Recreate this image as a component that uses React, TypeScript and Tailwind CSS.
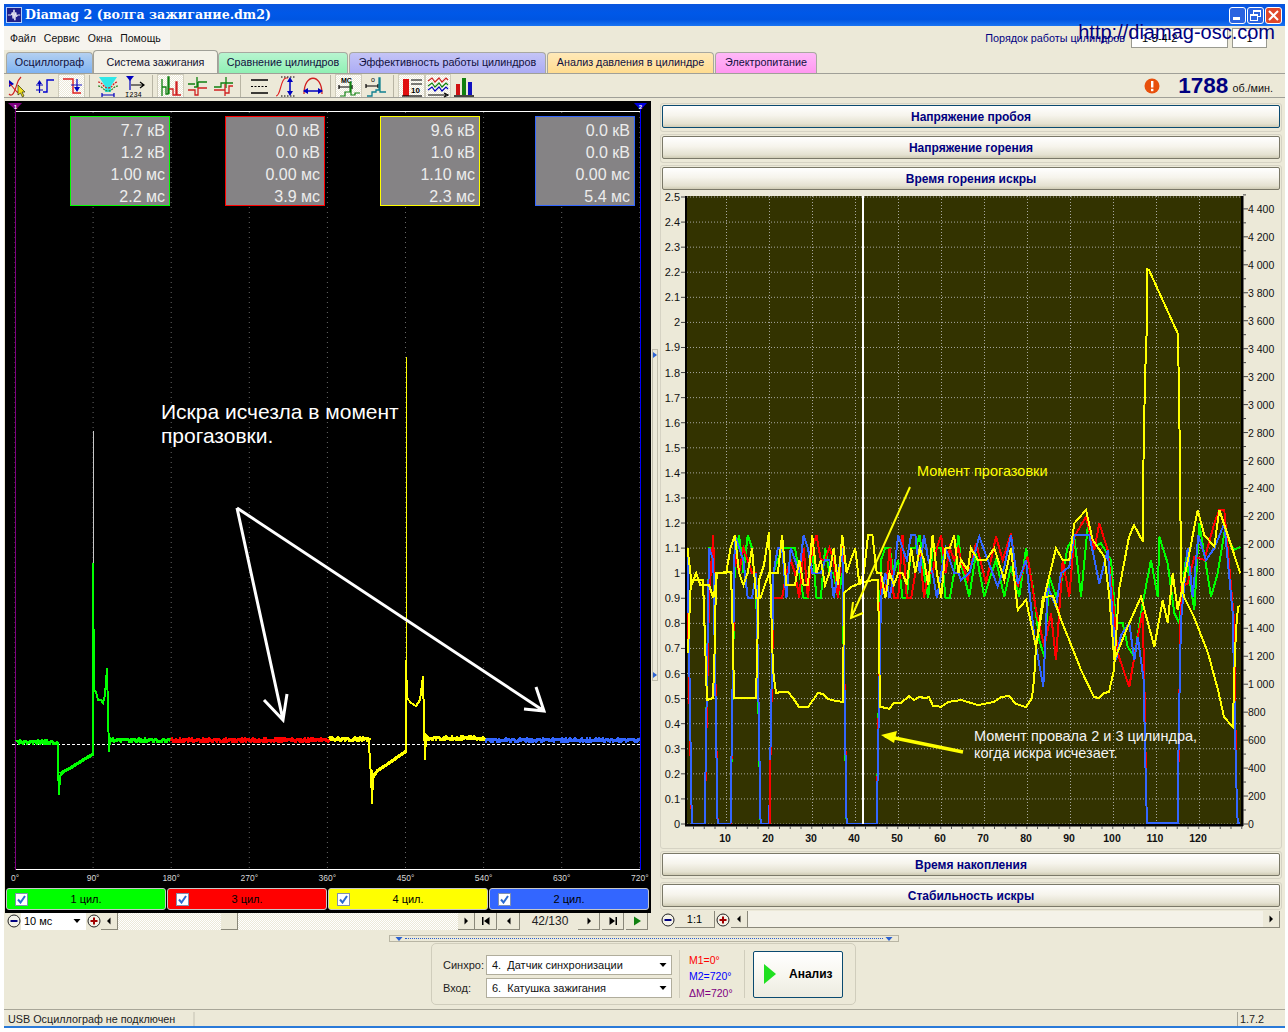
import React from "react";

const rng = (seed: number) => {
  let s = seed;
  const next = () => {
    s = (s * 16807) % 2147483647;
    return s / 2147483647;
  };
  for (let i = 0; i < 8; i++) next();
  return next;
};

/* ---------- oscilloscope traces (page coordinates) ---------- */
const noisy = (x0: number, x1: number, y: number, seed: number, amp = 1.5) => {
  const r = rng(seed);
  const pts: string[] = [];
  for (let x = x0; x <= x1; x += 1) pts.push(`${x},${(y + (r() - 0.5) * amp * 2).toFixed(0)}`);
  return pts.join(" ");
};

const greenPulse =
  "58,742 58,767 59,795 60,776 64,772 70,769 78,764 86,759 93,755 93,563 94,690 96,692 98,700 101,700 103,703 105,695 107,668 108,711 109,752 110,738 113,741";
const greenDecay = "60,774 64,771 70,768 78,763 86,758 93,754";
const yellowPulse =
  "369,740 370,765 371,772 372,804 373,778 378,771 386,766 396,759 406,752 406,660 407,698 411,703 416,706 420,700 423,676 424,720 425,760 426,735 430,739 434,738";
const yellowDecay = "371,770 373,776 378,770 386,765 396,758 406,751";

/* ---------- burn-time chart (page coordinates) ---------- */
const z6 = (s: string) =>
  s.split(" ").map((p) => {
    const [a, b] = p.split(",").map(Number);
    return [960 + a / 3, 480 + b / 3] as [number, number];
  });

const dropouts: [number, number][] = [
  [2, 5],
  [8, 11],
  [18, 20],
  [38, 45],
];
const xOf = (n: number) => 682.2 + 4.3 * n;

const bandTrace = (seed: number, drop: boolean) => {
  const r = rng(seed);
  const pts: [number, number][] = [];
  const levels = drop ? [548, 573, 598, 548, 573, 598, 560, 535] : [548, 573, 598, 585, 560, 535, 573, 585];
  for (let n = 1; n <= 64; n++) {
    const inDrop = drop && dropouts.some(([a, b]) => n >= a && n <= b);
    let y = levels[Math.floor(r() * levels.length)];
    if (inDrop) y = 824;
    pts.push([xOf(n), y]);
  }
  return pts;
};
const toPts = (p: [number, number][]) => p.map(([x, y]) => `${x.toFixed(1)},${y.toFixed(1)}`).join(" ");

const greenTail = z6(
  "0,250 25,350 45,220 70,350 85,300 105,240 130,350 150,260 175,350 195,205 215,320 235,480 250,530 265,290 285,350 300,310 320,200 340,170 360,350 380,140 400,200 420,190 450,240 465,430 485,430 500,500 520,530 545,370 570,240 590,350 595,170 620,250 640,400 655,430 675,230 700,390 715,130 750,350 770,280 790,160 820,210 838,200"
);
const redTail = z6(
  "0,240 20,300 45,190 75,310 105,170 125,240 150,160 170,320 200,230 225,390 250,500 270,400 285,540 305,240 325,350 340,170 375,110 400,210 415,130 440,210 455,350 470,520 505,620 530,470 545,395 552,700 555,925 558,1030 650,1030 655,670 660,320 680,310 700,230 730,240 760,130 775,90 790,90 820,430 825,880 830,1030 838,1030"
);
const blueTail = z6(
  "0,300 25,280 55,170 80,240 110,320 130,260 150,165 170,310 195,240 220,470 247,620 260,320 285,380 300,280 325,260 340,165 385,165 415,310 440,210 465,540 480,465 505,430 520,540 530,470 548,600 552,800 555,925 558,1030 650,1030 652,850 655,670 660,420 680,205 695,350 712,165 735,240 760,205 790,130 815,400 825,880 830,1030 838,1030"
);
const yellowTail = z6(
  "0,240 20,270 30,205 50,240 75,240 100,205 130,300 150,205 170,390 195,360 225,500 250,350 285,205 305,240 325,240 340,130 375,90 395,180 430,230 445,350 460,540 500,440 540,350 580,500 605,360 620,430 635,280 650,390 665,320 710,90 730,165 760,200 775,90 800,165 838,280"
);

const redPts = toPts([...bandTrace(1234, true), ...redTail]);
const greenPts = toPts([...bandTrace(4321, true), ...greenTail]);
const bluePts = toPts([...bandTrace(987, true), ...blueTail]);
const yellowPts = toPts([...bandTrace(31337, false), ...yellowTail]);

const yellowLow =
  "687,653 689,600 690,580 702,580 704,640 706,700 712,698 714,640 715,573 730,572 732,640 733,698 755,698 757,620 758,580 763,565 768,532 770,600 772,670 775,693 780,692 787,692 792,698 798,707 807,707 812,700 817,693 822,694 827,699 835,701 842,702 843,593 850,587 862,582 873,580 877,580 878,640 879,707 886,708 888,709 893,703 900,703 908,696 913,700 918,697 925,698 928,697 932,706 936,706 940,707 947,702 960,700 977,705 993,702 1000,697 1008,696 1015,704 1025,707 1031,698 1033,680 1035,647 1042,597 1052,596 1060,620 1067,637 1080,670 1093,697 1098,698 1103,693 1108,692 1113,670 1118,590 1128,537 1133,525 1142,542 1142,487 1143,433 1144,378 1146,323 1146,269 1148,270 1177,334 1178,397 1179,460 1180,580 1183,597 1193,617 1207,653 1217,690 1223,717 1232,727 1233,680 1235,630 1237,607 1239,606";

const hLines = Array.from({ length: 26 }, (_, i) => 824 - i * 25.08);
const vLines = Array.from({ length: 12 }, (_, i) => 725 + i * 43);
const leftLabels = Array.from({ length: 26 }, (_, i) => {
  const v = i / 10;
  return { t: i % 10 === 0 ? String(i / 10) : v.toFixed(1), y: 824 - i * 25.08 };
});
const rightLabels = Array.from({ length: 23 }, (_, i) => {
  const v = i * 200;
  const t = v >= 1000 ? `${Math.floor(v / 1000)} ${String(v % 1000).padStart(3, "0")}` : String(v);
  return { t, y: 824 - v * 0.1398 };
});
const xTicks = Array.from({ length: 52 }, (_, i) => 692.5 + i * 10.75);
const degLabels = Array.from({ length: 9 }, (_, i) => ({ t: `${i * 90}°`, x: 15 + i * 78.1 }));

/* ---------- small widgets ---------- */
const Check = () => (
  <span className="flex h-[13px] w-[13px] items-center justify-center border border-[#8090b0] bg-white">
    <svg width="9" height="9" viewBox="0 0 9 9">
      <path d="M1 4.5 L3.5 7.5 L8 1" fill="none" stroke="#2a6ad0" strokeWidth="2" />
    </svg>
  </span>
);

const Channel = ({ label, bg }: { label: string; bg: string }) => (
  <div className={`relative flex h-[22px] w-[160px] items-center justify-center rounded-[3px] border border-[#c8c8c8] text-[11px] text-black ${bg}`}>
    <span className="absolute left-[8px] top-[4px]">
      <Check />
    </span>
    {label}
  </div>
);

const Metric = ({ border, pos, rows }: { border: string; pos: string; rows: string[] }) => (
  <div className={`absolute flex h-[90px] w-[100px] flex-col border bg-[#858385] pr-[4px] pt-[3px] text-right text-[16px] leading-[22px] text-[#ececec] ${border} ${pos}`}>
    {rows.map((r, i) => (
      <span key={i}>{r}</span>
    ))}
  </div>
);

const Tab = ({ w, bg, label }: { w: string; bg: string; label: string }) => (
  <div className={`mt-[2px] flex h-[21px] items-center justify-center rounded-t-[4px] border border-b-0 border-[#a8a8a0] pb-px text-[10.75px] text-[#101040] ${w} ${bg}`}>
    {label}
  </div>
);

const AccordionBtn = ({ label, focus }: { label: string; focus?: boolean }) => (
  <div
    className={`flex h-[23px] items-center justify-center rounded-[2px] border bg-[linear-gradient(180deg,#ffffff_0%,#f6f4ec_45%,#e4e1d0_85%,#cfcbb4_100%)] text-[12px] font-bold text-[#000080] ${
      focus ? "border-[#0a4a70]" : "border-[#7a7868]"
    }`}
  >
    {label}
  </div>
);
const Accordion = ({ label, focus, cls }: { label: string; focus?: boolean; cls: string }) => (
  <div className={`shrink-0 rounded-[3px] border border-[#d6d3c4] p-px ${cls}`}>
    <AccordionBtn label={label} focus={focus} />
  </div>
);

const Tri = ({ dir, color = "#000" }: { dir: "l" | "r" | "d"; color?: string }) => (
  <svg width="8" height="8" viewBox="0 0 8 8">
    {dir === "l" && <path d="M5.5 0.5 V7.5 L2 4 Z" fill={color} />}
    {dir === "r" && <path d="M2.5 0.5 V7.5 L6 4 Z" fill={color} />}
    {dir === "d" && <path d="M0.5 2 H7.5 L4 6 Z" fill={color} />}
  </svg>
);

const BtnBox = ({ w, children }: { w: string; children: React.ReactNode }) => (
  <div className={`flex h-[17px] shrink-0 items-center justify-center border-b border-r border-[#8a887a] bg-[#ece9d8] ${w}`}>{children}</div>
);

const Round = ({ plus }: { plus?: boolean }) => (
  <svg width="14" height="14" viewBox="0 0 14 14">
    <circle cx="7" cy="7" r="6" fill="#f4f2e8" stroke="#222" strokeWidth="1" />
    <rect x="3.5" y="6" width="7" height="2" fill={plus ? "#a00000" : "#000080"} />
    {plus && <rect x="6" y="3.5" width="2" height="7" fill="#a00000" />}
  </svg>
);

/* ---------- toolbar icons ---------- */
const G = ({ children }: { children: React.ReactNode }) => (
  <svg width="24" height="24" viewBox="0 0 24 24" fill="none" strokeWidth="1.2">
    {children}
  </svg>
);
const icons: { pressed?: boolean; w: string; el: React.ReactNode }[] = [
  { w: "w-[27px]", el: <G><path d="M3 6 L8 10 L3 13 Z" fill="#0000c0" /><path d="M3 20 C7 24 9 16 11 10 C12 6 14 4 15 3" stroke="#d02020" /><path d="M3 10 C6 10 9 18 13 19" stroke="#d02020" /><path d="M12 11 L12 21 L14.5 19 L16.5 23 L18 22 L16 18 L19 18 Z" fill="#f0e020" stroke="#303000" strokeWidth="0.7" /></G> },
  { w: "w-[27px]", el: <G><path d="M3 11 H10 M3 16 H10" stroke="#0000c0" /><path d="M6.5 19 V9" stroke="#0000c0" /><path d="M4 10 L6.5 6 L9 10 Z" fill="#0000c0" /><path d="M10 18 H14 V6 H21" stroke="#0000d0" strokeWidth="1.4" /></G> },
  { pressed: true, w: "w-[27px]", el: <G><path d="M3 5 H13 V19 H21" stroke="#e02020" strokeWidth="1.4" /><path d="M11 11 H22" stroke="#0000c0" strokeWidth="0.9" /><path d="M17 5 V15" stroke="#0000c0" /><path d="M14 13 L17 18 L20 13 Z" fill="#0000c0" /></G> },
  { w: "w-[27px]", el: <G><path d="M3 3 H21 L15 12 V18 H9 V12 Z" fill="#30e8e8" /><path d="M2 8 C7 8 7 14 12 14 C17 14 17 8 22 8" stroke="#d02020" strokeDasharray="2 1" /><path d="M2 12 C7 12 7 17 12 17 C17 17 17 12 22 12" stroke="#208020" strokeDasharray="2 1" /><path d="M6 21 H18 M6 19 V23 M18 19 V23" stroke="#0000c0" /></G> },
  { w: "w-[27px]", el: <G><path d="M3 2 H11 L7 7 Z" fill="#0000c0" /><path d="M7 6 V16" stroke="#0000c0" /><path d="M8 11 H20 M17 8 L21 11 L17 14" stroke="#000" /><text x="2" y="23" fontSize="7" fill="#000" fontFamily="Liberation Mono">I234</text></G> },
  { pressed: true, w: "w-[27px]", el: <G><path d="M3 22 V5 M3 13 H7 V20 H9 V3 H10 V20" stroke="#108010" strokeWidth="1.3" /><path d="M10 15 H14 V21 H17 V8 H18 V21 H22" stroke="#d02020" strokeWidth="1.3" /></G> },
  { w: "w-[26px]", el: <G><path d="M3 10 H10 M13 8 H22 M12 3 V13 M9 13 H13 V8" stroke="#108010" strokeWidth="1.3" /><path d="M3 16 H10 V21 H13 V14 H22" stroke="#d02020" strokeWidth="1.3" /></G> },
  { w: "w-[26px]", el: <G><path d="M3 13 H10 V9 H22 M15 3 V14" stroke="#108010" strokeWidth="1.3" /><path d="M3 16 H14 V19 H18 V12 H22 M14 10 V22" stroke="#d02020" strokeWidth="1.3" /></G> },
  { w: "w-[27px]", el: <G><path d="M4 6 H21 M4 19 H21" stroke="#000" strokeWidth="1.3" /><path d="M4 12.5 H21" stroke="#000" strokeWidth="1.2" strokeDasharray="2 1.5" /></G> },
  { w: "w-[27px]", el: <G><path d="M2 22 C7 22 6 5 12 4 H14" stroke="#e02020" /><path d="M7 3 H22 M7 22 H22" stroke="#000" strokeDasharray="1.5 1.5" strokeWidth="1" /><path d="M16 5 V20" stroke="#0000c0" strokeWidth="1.5" /><path d="M13 8 L16 3 L19 8 Z M13 17 L16 22 L19 17 Z" fill="#0000c0" /></G> },
  { w: "w-[27px]", el: <G><path d="M3 20 C3 -1 21 -1 21 20" stroke="#d02020" strokeWidth="1.3" /><path d="M3 17 H21" stroke="#0000c0" strokeWidth="1.5" /><path d="M7 14 L2 17 L7 20 Z M17 14 L22 17 L17 20 Z" fill="#0000c0" /></G> },
  { pressed: true, w: "w-[27px]", el: <G><text x="4" y="9" fontSize="7" fontWeight="700" fill="#000" fontFamily="Liberation Sans">MC</text><path d="M2 13 H15 M2 11 V15 M15 11 V15" stroke="#000" /><path d="M3 22 H8 V18 H13 V8 H14 V21 H18 V19 H23" stroke="#108010" /></G> },
  { w: "w-[27px]", el: <G><text x="7" y="8" fontSize="7" fill="#000" fontFamily="Liberation Sans">o</text><path d="M2 12 H14 M2 10 V14 M14 10 V14" stroke="#000" /><path d="M3 22 H8 V18 H12 V16 H15 V4 H16 V18 H22" stroke="#108090" strokeWidth="1.3" /></G> },
  { pressed: true, w: "w-[27px]", el: <G><rect x="3" y="5" width="6" height="17" fill="#e01010" /><path d="M11 6 H22 M11 10 H22" stroke="#000" strokeWidth="1" /><text x="11" y="19" fontSize="8" fontWeight="700" fill="#000" fontFamily="Liberation Sans">10</text><path d="M2 22 H22" stroke="#000" /></G> },
  { pressed: true, w: "w-[26px]", el: <G><path d="M2 7 L6 4 L9 8 L13 4 L16 8 L20 4 L22 6" stroke="#d02020" /><path d="M2 12 L6 9 L9 13 L13 9 L16 13 L20 9 L22 11" stroke="#108010" /><path d="M2 16 L6 13 L9 17 L13 13 L16 17 L20 13 L22 15" stroke="#0000c0" /><path d="M2 21 H20 M18 19 L22 21 L18 23" stroke="#000" /></G> },
  { w: "w-[26px]", el: <G><rect x="4" y="10" width="4" height="11" fill="#d01010" /><rect x="10" y="4" width="4" height="17" fill="#108010" /><rect x="16" y="8" width="4" height="13" fill="#1010c0" /><path d="M2 22 H22" stroke="#000" strokeWidth="1.4" /></G> },
];
const seps = new Set([2, 4, 7, 10, 12]);

export default function App() {
  return (
    <div className="h-[1032px] w-[1288px] overflow-hidden bg-white pl-[4px] pt-[4px] font-['Liberation_Sans'] text-black">
      <div className="flex h-[1024px] w-[1281px] flex-col bg-[#ece9d8]">
        {/* title bar */}
        <div className="flex h-[22px] shrink-0 items-center bg-[linear-gradient(180deg,#0a55dd_0%,#0058e8_40%,#0055e2_70%,#1a74f2_100%)] pl-[2px] pr-[3px]">
          <svg width="16" height="16" viewBox="0 0 16 16" className="border border-white/70">
            <rect width="16" height="16" fill="#20208a" />
            <path d="M1 8 H5 L6 5 L7 12 L8 2 L9 14 L10 5 L11 10 L12 8 H15" stroke="#fff" strokeWidth="1" fill="none" />
          </svg>
          <span className="ml-[3px] font-['DejaVu_Serif'] text-[12.6px] font-bold text-white">Diamag 2 (волга зажигание.dm2)</span>
          <div className="ml-auto flex gap-px">
            <div className="flex h-[17px] w-[17px] items-end justify-start rounded-[3px] border border-white bg-[#2a63e0] p-[3px]">
              <div className="h-[3px] w-[7px] bg-white" />
            </div>
            <div className="relative h-[17px] w-[17px] rounded-[3px] border border-white bg-[#2a63e0]">
              <div className="absolute left-[5px] top-[2px] h-[7px] w-[8px] border border-t-2 border-white" />
              <div className="absolute left-[2px] top-[6px] h-[7px] w-[8px] border border-t-2 border-white bg-[#2a63e0]" />
            </div>
            <div className="flex h-[17px] w-[17px] items-center justify-center rounded-[3px] border border-white bg-[#e0482a]">
              <svg width="11" height="11" viewBox="0 0 11 11">
                <path d="M1 1 L10 10 M10 1 L1 10" stroke="#fff" strokeWidth="2" />
              </svg>
            </div>
          </div>
        </div>

        {/* menu row */}
        <div className="relative flex h-[24px] shrink-0 items-center pr-[18px]">
          <div className="flex h-full w-[166px] items-center gap-[8px] bg-[#f6f4ee] pl-[6px] pt-[2px] text-[10.5px] text-[#111]">
            <span>Файл</span>
            <span>Сервис</span>
            <span>Окна</span>
            <span>Помощь</span>
          </div>
          <span className="ml-auto mr-[6px] text-[10.8px] text-[#000080]">Порядок работы цилиндров</span>
          <div className="flex h-[20px] w-[97px] items-center border border-[#9a9a90] bg-white pl-[10px] text-[11px]">1-3-4-2</div>
          <div className="ml-[4px] flex h-[20px] w-[35px] items-center justify-center border border-[#9a9a90] bg-white text-[11px]">1</div>
          <span className="absolute right-[10px] top-[-6px] text-[20px] leading-[24px] text-[#000080]">http://diamag-osc.com</span>
        </div>

        {/* tabs */}
        <div className="flex h-[23px] shrink-0 items-start pl-[2px]">
          <Tab w="w-[87px]" bg="bg-[linear-gradient(180deg,#b4d0f0,#7fb3f2)]" label="Осциллограф" />
          <div className="flex h-[24px] w-[125px] items-center justify-center rounded-t-[4px] border border-b-0 border-[#a0a098] bg-[#f4f2e8] pb-px text-[10.75px] text-[#101030]">Система зажигания</div>
          <Tab w="w-[130px]" bg="bg-[linear-gradient(180deg,#b8f5d0,#90f0b4)]" label="Сравнение цилиндров" />
          <Tab w="ml-px w-[197px]" bg="bg-[linear-gradient(180deg,#c4c4f6,#acacf4)]" label="Эффективность работы цилиндров" />
          <Tab w="ml-px w-[167px]" bg="bg-[linear-gradient(180deg,#ffe9b8,#ffdc90)]" label="Анализ давления в цилиндре" />
          <Tab w="ml-px w-[102px]" bg="bg-[linear-gradient(180deg,#ffb8f8,#ff98f0)]" label="Электропитание" />
        </div>

        {/* toolbar */}
        <div className="flex h-[25px] shrink-0 items-center border-t border-b border-[#a0a098] pr-[12px]">
          {icons.map((ic, i) => (
            <React.Fragment key={i}>
              <div className={`flex h-[23px] shrink-0 items-center justify-center ${ic.w} ${ic.pressed ? "border-x border-t border-[#d0cdbc] bg-[repeating-conic-gradient(#ffffff_0_25%,#ece9d8_0_50%)] bg-[length:2px_2px]" : ""}`}>{ic.el}</div>
              {seps.has(i) && <div className="mx-[4px] h-[22px] w-px shrink-0 bg-[#b8b5a4]" />}
            </React.Fragment>
          ))}
          <div className="ml-auto flex items-center">
            <svg width="16" height="16" viewBox="0 0 16 16">
              <circle cx="8" cy="8" r="7.5" fill="#e8500c" />
              <rect x="7" y="3" width="2.4" height="6.5" fill="#fff" />
              <rect x="7" y="10.8" width="2.4" height="2.4" fill="#fff" />
            </svg>
            <span className="ml-[18px] mt-px text-[22.5px] font-bold leading-[24px] text-[#000080]">1788</span>
            <span className="ml-[4px] mt-[5px] text-[10.8px] text-[#111]">об./мин.</span>
          </div>
        </div>

        {/* main area */}
        <div className="mt-[3px] flex h-[828px] shrink-0 pl-px">
          {/* left column */}
          <div className="flex w-[646px] shrink-0 flex-col">
            <div className="flex h-[812px] flex-col bg-black">
              <div className="relative h-[787px]">
                <svg width="646" height="787" viewBox="5 101 646 787" className="block">
                  {degLabels.map((d) => (
                    <line key={d.x} x1={d.x} x2={d.x} y1="112" y2="870" stroke="#666" strokeWidth="1" strokeDasharray="1 4" />
                  ))}
                  <line x1="15" x2="640" y1="111.5" y2="111.5" stroke="#fff" />
                  <line x1="15" x2="640" y1="869.5" y2="869.5" stroke="#fff" />
                  <line x1="15.5" x2="15.5" y1="104" y2="870" stroke="#800080" />
                  <line x1="640.5" x2="640.5" y1="104" y2="870" stroke="#0000ff" />
                  <path d="M8 103 H22 L15.5 110 Z" fill="#800080" />
                  <path d="M634 103 H647 L640.5 110 Z" fill="#0000e0" />
                  <text x="15.5" y="108.5" fontSize="6" fontWeight="700" fill="#fff" textAnchor="middle">1</text>
                  <text x="640.5" y="108.5" fontSize="6" fontWeight="700" fill="#fff" textAnchor="middle">2</text>
                  <line x1="12" x2="640" y1="744.5" y2="744.5" stroke="#fff" strokeDasharray="3 2" />
                  {/* traces */}
                  <line x1="93.5" x2="93.5" y1="431" y2="563" stroke="#c8c8c8" />
                  <polyline points={noisy(16, 58, 742, 11)} fill="none" stroke="#00ff00" strokeWidth="3" shapeRendering="crispEdges" />
                  <polyline points={greenPulse} fill="none" stroke="#00ff00" strokeWidth="2" shapeRendering="crispEdges" />
                  <polyline points={greenDecay} fill="none" stroke="#00ff00" strokeWidth="3" shapeRendering="crispEdges" />
                  <polyline points={noisy(110, 171, 740, 12)} fill="none" stroke="#00ff00" strokeWidth="3" shapeRendering="crispEdges" />
                  <polyline points={noisy(171, 329, 740, 13)} fill="none" stroke="#ff0000" strokeWidth="3" shapeRendering="crispEdges" />
                  <polyline points={noisy(329, 370, 739, 14)} fill="none" stroke="#ffff00" strokeWidth="3" shapeRendering="crispEdges" />
                  <line x1="406.5" x2="406.5" y1="357" y2="752" stroke="#ffff00" />
                  <polyline points={yellowPulse} fill="none" stroke="#ffff00" strokeWidth="2" shapeRendering="crispEdges" />
                  <polyline points={yellowDecay} fill="none" stroke="#ffff00" strokeWidth="3" shapeRendering="crispEdges" />
                  <polyline points={noisy(426, 485, 738, 15)} fill="none" stroke="#ffff00" strokeWidth="3" shapeRendering="crispEdges" />
                  <polyline points={noisy(485, 640, 740, 16)} fill="none" stroke="#3366ff" strokeWidth="3" shapeRendering="crispEdges" />
                  {/* annotation arrows */}
                  <path d="M237 508 L283 720 M264 700 L283 720 L287 694" fill="none" stroke="#fff" strokeWidth="3" />
                  <path d="M237 508 L544 711 M536 687 L544 711 L524 709" fill="none" stroke="#fff" strokeWidth="3" />
                  {/* degree labels */}
                  {degLabels.map((d) => (
                    <text key={d.t} x={d.x} y="881" fontSize="8.5" fill="#d8d8d8" textAnchor="middle">{d.t}</text>
                  ))}
                </svg>
                <Metric border="border-[#00ff00]" pos="left-[65px] top-[15px]" rows={["7.7 кВ", "1.2 кВ", "1.00 мс", "2.2 мс"]} />
                <Metric border="border-[#ff0000]" pos="left-[220px] top-[15px]" rows={["0.0 кВ", "0.0 кВ", "0.00 мс", "3.9 мс"]} />
                <Metric border="border-[#ffff00]" pos="left-[375px] top-[15px]" rows={["9.6 кВ", "1.0 кВ", "1.10 мс", "2.3 мс"]} />
                <Metric border="border-[#3366ff]" pos="left-[530px] top-[15px]" rows={["0.0 кВ", "0.0 кВ", "0.00 мс", "5.4 мс"]} />
                <div className="absolute left-[156px] top-[299px] text-[21px] leading-[24px] text-white">
                  Искра исчезла в момент
                  <br />
                  прогазовки.
                </div>
              </div>
              <div className="flex gap-px pl-px">
                <Channel label="1 цил." bg="bg-[#00ff00]" />
                <Channel label="3 цил." bg="bg-[#ff0000]" />
                <Channel label="4 цил." bg="bg-[#ffff00]" />
                <Channel label="2 цил." bg="bg-[#3366ff]" />
              </div>
            </div>
            {/* transport row */}
            <div className="flex h-[16px] items-center text-[11px]">
              <div className="ml-px flex w-[15px] justify-center"><Round /></div>
              <div className="flex h-[17px] w-[65px] items-center justify-between bg-white pl-[3px] pr-[5px]">10 мс <Tri dir="d" /></div>
              <div className="flex w-[15px] justify-center"><Round plus /></div>
              <BtnBox w="w-[17px]"><Tri dir="l" /></BtnBox>
              <div className="flex h-[17px] w-[340px] bg-[repeating-conic-gradient(#ffffff_0_25%,#ece9d8_0_50%)] bg-[length:2px_2px]">
                <div className="w-[103px]" />
                <BtnBox w="w-[17px]"><span /></BtnBox>
              </div>
              <BtnBox w="w-[17px]"><Tri dir="r" /></BtnBox>
              <BtnBox w="w-[22px]"><svg width="10" height="8" viewBox="0 0 10 8"><path d="M1 0 H2.5 V8 H1 Z M8.5 0 V8 L3 4 Z" fill="#000" /></svg></BtnBox>
              <BtnBox w="ml-px w-[22px]"><Tri dir="l" /></BtnBox>
              <div className="w-[58px] pl-[2px] text-center text-[12px] text-[#222]">42/130</div>
              <BtnBox w="w-[22px]"><Tri dir="r" /></BtnBox>
              <BtnBox w="ml-[2px] w-[22px]"><svg width="10" height="8" viewBox="0 0 10 8"><path d="M7.5 0 H9 V8 H7.5 Z M1.5 0 V8 L7 4 Z" fill="#000" /></svg></BtnBox>
              <BtnBox w="ml-[2px] w-[22px]"><svg width="10" height="10" viewBox="0 0 10 10"><path d="M2 0.5 V9.5 L9 5 Z" fill="#108010" /></svg></BtnBox>
            </div>
          </div>

          {/* vertical splitter */}
          <div className="flex w-[9px] shrink-0 items-center justify-start pl-px">
            <div className="flex h-[332px] w-[6px] flex-col items-center justify-between border border-[#c0bdac] bg-[#ece9d8] py-[2px]">
              <svg width="4" height="6" viewBox="0 0 4 6"><path d="M0 0 L4 3 L0 6 Z" fill="#2a60d0" /></svg>
              <svg width="4" height="6" viewBox="0 0 4 6"><path d="M0 0 L4 3 L0 6 Z" fill="#2a60d0" /></svg>
            </div>
          </div>

          {/* right column */}
          <div className="flex w-[622px] shrink-0 flex-col gap-[2px] pt-[2px]">
            <Accordion label="Напряжение пробоя" focus cls="h-[29px]" />
            <Accordion label="Напряжение горения" cls="h-[29px]" />
            <div className="relative h-[684px] shrink-0 rounded-[3px] border border-[#d6d3c4] p-px">
              <AccordionBtn label="Время горения искры" />
              <svg width="620" height="657" viewBox="661 190 620 657" className="block font-['Liberation_Sans']">
                <rect x="686" y="196" width="554" height="628" fill="#333300" />
                {hLines.map((y) => (
                  <line key={y} x1="686" x2="1240" y1={y} y2={y} stroke="#a8a8a0" strokeDasharray="1 2" />
                ))}
                {vLines.map((x) => (
                  <line key={x} x1={x + 0.5} x2={x + 0.5} y1="196" y2="824" stroke="#a8a8a0" strokeDasharray="1 2" />
                ))}
                <polyline points={greenPts} fill="none" stroke="#00ff00" strokeWidth="2" shapeRendering="crispEdges" />
                <polyline points={redPts} fill="none" stroke="#ff0000" strokeWidth="2" shapeRendering="crispEdges" />
                <polyline points={bluePts} fill="none" stroke="#3366ff" strokeWidth="2" shapeRendering="crispEdges" />
                <polyline points={yellowPts} fill="none" stroke="#ffff00" strokeWidth="2" shapeRendering="crispEdges" />
                <polyline points={yellowLow} fill="none" stroke="#ffff00" strokeWidth="2" shapeRendering="crispEdges" />
                <line x1="769" x2="769" y1="760" y2="824" stroke="#ff0000" strokeWidth="2" />
                <rect x="861" y="196" width="2" height="628" fill="#ffffff" />
                {/* annotation arrows */}
                <path d="M909 487 L850 618 M852 602 L850 618 L862 613" fill="none" stroke="#ffff00" strokeWidth="2" />
                <path d="M962 752 L884 736" stroke="#ffff00" strokeWidth="3.5" />
                <path d="M880 735 L896 731 L893 743 Z" fill="#ffff00" />
                {/* axes */}
                <rect x="684" y="196" width="2" height="630" fill="#000" />
                <rect x="684" y="824" width="558" height="2.5" fill="#000" />
                <rect x="1240" y="196" width="2.5" height="630" fill="#000" />
                {leftLabels.map((l) => (
                  <g key={l.t}>
                    <line x1="680" x2="684" y1={l.y} y2={l.y} stroke="#444" />
                    <text x="679" y={l.y + 4} fontSize="11" fill="#111" textAnchor="end">{l.t}</text>
                  </g>
                ))}
                {rightLabels.map((l) => (
                  <g key={l.t}>
                    <line x1="1242" x2="1247" y1={l.y} y2={l.y} stroke="#444" />
                    <line x1="1242" x2="1245" y1={l.y - 14} y2={l.y - 14} stroke="#444" />
                    <text x="1247" y={l.y + 4} fontSize="10.5" fill="#111">{l.t}</text>
                  </g>
                ))}
                {xTicks.map((x) => (
                  <line key={x} x1={x} x2={x} y1="826" y2="829" stroke="#555" />
                ))}
                {vLines.map((x, i) => (
                  <text key={x} x={x - 1} y="842" fontSize="10.5" fontWeight="700" fill="#111" textAnchor="middle">{(i + 1) * 10}</text>
                ))}
              </svg>
              <div className="absolute left-[256px] top-[297px] text-[14.5px] leading-[16px] text-[#ffff00]">Момент прогазовки</div>
              <div className="absolute left-[313px] top-[562px] text-[14.5px] leading-[17px] text-[#f4f4f4]">
                Момент провала 2 и 3 цилиндра,
                <br />
                когда искра исчезает.
              </div>
            </div>
            <Accordion label="Время накопления" cls="h-[28px]" />
            <Accordion label="Стабильность искры" cls="mt-px h-[28px]" />
            <div className="-mt-px flex h-[17px] items-center pr-[2px] text-[11px]">
              <div className="flex w-[15px] justify-center"><Round /></div>
              <div className="flex h-[17px] w-[40px] items-center justify-center border-b border-r border-[#8a887a]">1:1</div>
              <div className="flex w-[16px] justify-center"><Round plus /></div>
              <BtnBox w="w-[17px]"><Tri dir="l" /></BtnBox>
              <div className="h-[17px] flex-1 border-b border-[#8a887a] bg-[#f4f2e8]" />
              <BtnBox w="w-[17px]"><Tri dir="r" /></BtnBox>
            </div>
          </div>
        </div>

        {/* horizontal splitter */}
        <div className="ml-[385px] mt-[6px] flex h-[7px] w-[510px] shrink-0 items-center justify-between border border-[#b8b5a4] px-[5px]">
          <Tri dir="d" color="#2a60d0" />
          <div className="mx-[2px] h-px flex-1 border-t border-dotted border-[#2a60d0]" />
          <Tri dir="d" color="#2a60d0" />
        </div>

        {/* bottom panel */}
        <div className="ml-[427px] mt-px flex h-[62px] w-[425px] shrink-0 items-center rounded-[5px] border border-[#d0cdbc] pl-[11px] pt-[5px] text-[11px] text-[#222]">
          <div className="flex flex-col gap-[3px]">
            <div className="flex h-[20px] items-center">
              <span className="w-[43px]">Синхро:</span>
              <div className="flex h-[20px] w-[186px] items-center justify-between border border-[#b0ad9c] bg-white pl-[5px] pr-[4px] text-[#111]"><span>4.&nbsp; Датчик синхронизации</span><Tri dir="d" /></div>
            </div>
            <div className="flex h-[20px] items-center">
              <span className="w-[43px]">Вход:</span>
              <div className="flex h-[20px] w-[186px] items-center justify-between border border-[#b0ad9c] bg-white pl-[5px] pr-[4px] text-[#111]"><span>6.&nbsp; Катушка зажигания</span><Tri dir="d" /></div>
            </div>
          </div>
          <div className="-mt-[5px] ml-[7px] h-[48px] w-px bg-[#d0cdbc]" />
          <div className="ml-[9px] flex w-[55px] flex-col text-[10.5px] leading-[16.5px]">
            <span className="text-[#ff0000]">M1=0°</span>
            <span className="text-[#0000ff]">M2=720°</span>
            <span className="text-[#800080]">ΔM=720°</span>
          </div>
          <div className="-mt-[5px] h-[48px] w-px bg-[#d0cdbc]" />
          <div className="-mt-[5px] ml-[8px] flex h-[47px] w-[90px] items-center rounded-[2px] border border-[#0a4a70] bg-[linear-gradient(180deg,#ffffff_0%,#f8f7f0_50%,#ecebe0_100%)] pl-[10px]">
            <svg width="12" height="20" viewBox="0 0 12 20"><path d="M0 0 L12 10 L0 20 Z" fill="#20e020" /></svg>
            <span className="ml-[13px] text-[12px] font-bold text-black">Анализ</span>
          </div>
        </div>

        {/* status bar */}
        <div className="mt-[4px] flex h-[17px] shrink-0 border-t border-[#a8a698] pt-[2px] text-[10.8px] text-[#222]">
          <div className="flex w-[191px] items-center border-r-2 border-[#d8d5c5] pl-[4px]">USB Осциллограф не подключен</div>
          <div className="flex-1" />
          <div className="flex w-[48px] items-center border-l border-[#a8a698] pl-[2px]">1.7.2</div>
        </div>
        <div className="h-[2px] shrink-0 bg-[#2a7ad8]" />
      </div>
    </div>
  );
}
